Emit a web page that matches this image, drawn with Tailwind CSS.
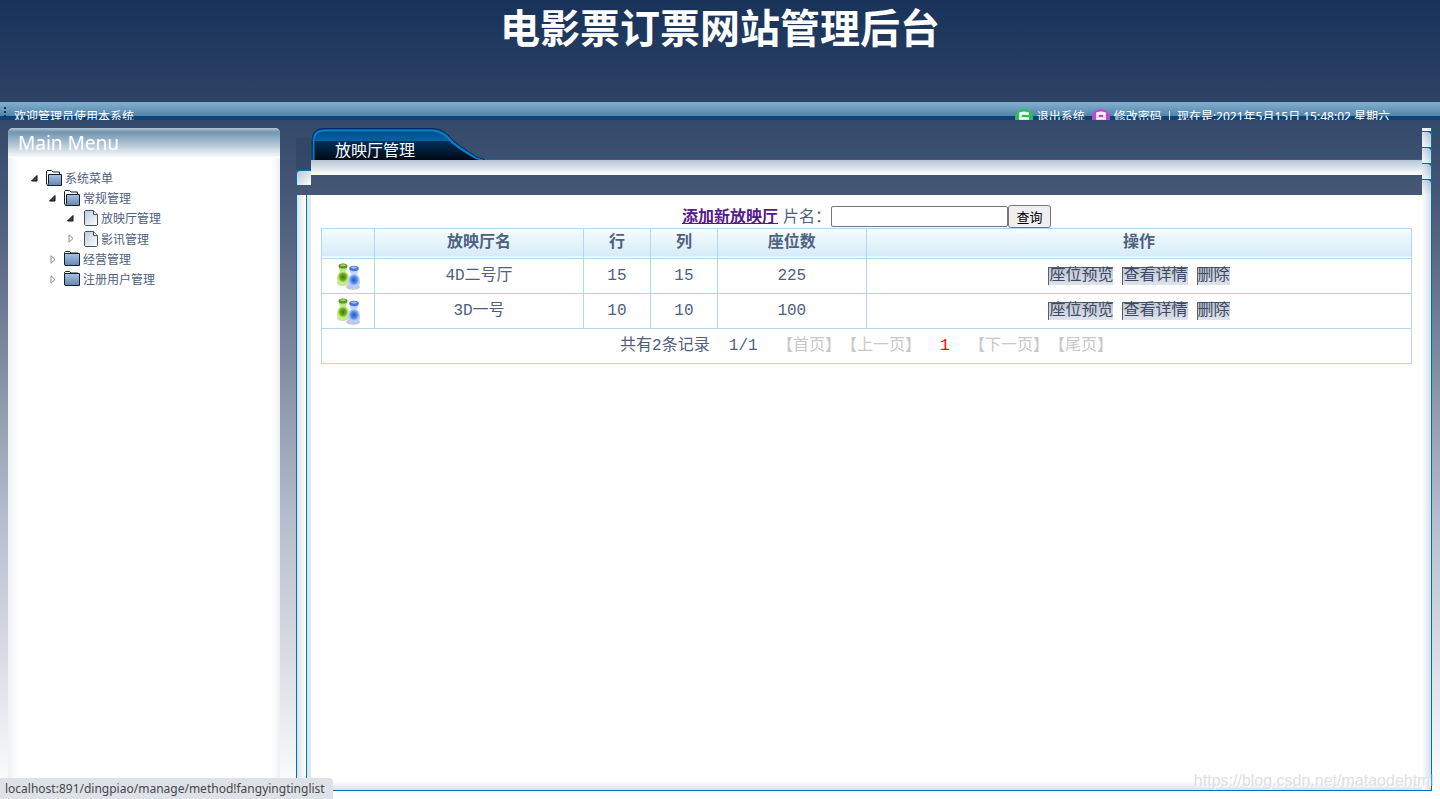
<!DOCTYPE html>
<html lang="zh-CN">
<head>
<meta charset="utf-8">
<title>电影票订票网站管理后台</title>
<script src="https://cdn.jsdelivr.net/npm/@tailwindcss/browser@4"></script>
</head>
<body class="relative flex h-screen flex-col overflow-hidden font-['Liberation_Sans','Noto_Sans_CJK_SC',sans-serif] text-[#4f6180]">
<svg class="absolute h-0 w-0" aria-hidden="true">
  <defs>
    <linearGradient id="gFolder" x1="0" y1="0" x2="0" y2="1"><stop offset="0" stop-color="#a9c2e0"/><stop offset="1" stop-color="#6486b0"/></linearGradient>
    <linearGradient id="gPage" x1="0" y1="0" x2="1" y2="1"><stop offset="0" stop-color="#b9cbdb"/><stop offset="1" stop-color="#ffffff"/></linearGradient>
    <linearGradient id="gTabTop" x1="0" y1="0" x2="0" y2="1"><stop offset="0" stop-color="#004a86"/><stop offset=".4" stop-color="#0562a6"/></linearGradient>
    <linearGradient id="gTabBottom" x1="0" y1="0" x2="0" y2="1"><stop offset="0" stop-color="#00305a"/><stop offset="1" stop-color="#000a14"/></linearGradient>
    <radialGradient id="gGreen" cx=".5" cy=".5" r=".5"><stop offset="0" stop-color="#3f7d06"/><stop offset=".6" stop-color="#6dab22"/><stop offset="1" stop-color="#c3f07a"/></radialGradient>
    <radialGradient id="gBlue" cx=".5" cy=".5" r=".5"><stop offset="0" stop-color="#2457b4"/><stop offset=".6" stop-color="#5b8ce8"/><stop offset="1" stop-color="#b5cfff"/></radialGradient>
    <symbol id="folderOpen" viewBox="0 0 16 16">
      <path d="M.5 14.5V1.500L1.500.5H5.500L7 2H13.500V4" fill="#fff" stroke="#14202e"/>
      <path d="M2.500 4.500H15.500V15.500H1.500L2.500 13Z" fill="url(#gFolder)" stroke="#14202e"/>
    </symbol>
    <symbol id="folder" viewBox="0 0 16 16">
      <path d="M.5 2.500V1.500L1.500.5H5.500L7 2H14" fill="#fff" stroke="#14202e"/>
      <path d="M.5 2.500H15.500V14.500H1L.5 13Z" fill="url(#gFolder)" stroke="#14202e"/>
    </symbol>
    <symbol id="page" viewBox="0 0 14 16">
      <path d="M1.500.5H9.500L13.500 4.500V14.500L12.500 15.500H1.500L.5 14.500V1.500Z" fill="url(#gPage)" stroke="#424d5c"/>
      <path d="M9.500.5V4.500H13.500" fill="#fff" stroke="#424d5c"/>
    </symbol>
    <symbol id="opened" viewBox="0 0 7 7"><path d="M6 .5V6H.5Z" fill="#444" stroke="#111"/></symbol>
    <symbol id="closed" viewBox="0 0 7 9"><path d="M2 .8V8.200L6 4.500Z" fill="#fff" stroke="#8b8b8b"/></symbol>
    <symbol id="users" viewBox="0 0 25 27">
      <ellipse cx="17" cy="24" rx="7" ry="2.800" fill="#c4c8cc"/>
      <ellipse cx="7" cy="20" rx="6" ry="3" fill="#cfd4c6"/>
      <ellipse cx="7" cy="5" rx="4" ry="4.500" fill="#bdea80"/>
      <ellipse cx="7" cy="3" rx="4.500" ry="2.600" fill="#5c9420"/>
      <ellipse cx="7" cy="2.200" rx="2.800" ry="1" fill="#a8d070"/>
      <path d="M7 8c4 0 6 3.500 5.800 7.500S11 22 7 22 1 19.500 1.100 15.500 3 8 7 8Z" fill="#c2f07c"/>
      <ellipse cx="7" cy="14" rx="5.200" ry="5.600" fill="url(#gGreen)"/>
      <ellipse cx="18" cy="8" rx="4" ry="4" fill="#c3d6ff"/>
      <ellipse cx="18" cy="5.500" rx="4.800" ry="2.800" fill="#4a78d4"/>
      <ellipse cx="18" cy="4.600" rx="3" ry="1.100" fill="#9dbdf8"/>
      <path d="M18 11c4 0 6 3.500 6 7.500S22 25 18 25 12 22.500 12 18.500 14 11 18 11Z" fill="#b5ceff"/>
      <ellipse cx="18" cy="17" rx="5.300" ry="5.800" fill="url(#gBlue)"/>
    </symbol>
  </defs>
</svg>

<header class="h-[102px] shrink-0 bg-linear-to-b from-[#18325a] to-[#2d4365] pt-[2px]">
  <h1 class="text-center font-['Noto_Sans_CJK_SC',sans-serif] text-[40px] leading-[48px] font-bold text-white">电影票订票网站管理后台</h1>
</header>

<div class="flex h-[18px] shrink-0 justify-between overflow-hidden bg-[linear-gradient(to_bottom,#82b0d0_0,#5384a8_14px,#0d4478_14px,#0d4478_18px)] pt-[5px] pr-[50px] pl-1 font-['Noto_Sans','Noto_Sans_CJK_SC',sans-serif] text-xs leading-5 text-white">
  <div class="flex gap-2"><span class="h-5 w-[2px] bg-[repeating-linear-gradient(to_bottom,#17345c_0,#17345c_2px,transparent_2px,transparent_4px)]"></span><span>欢迎管理员使用本系统</span></div>
  <div class="flex gap-1">
    <svg class="mt-px h-[18px] w-[18px]" viewBox="0 0 18 18"><circle cx="9" cy="10" r="9" fill="#27c254"/><path d="M4 6Q9 0 14 6" fill="#7be79a"/><path d="M5.500 9V5.500H12.500V7M4 10.500H14" fill="none" stroke="#fff" stroke-width="2.500"/></svg>
    <a href="#" class="mr-[3px]">退出系统</a>
    <svg class="mt-px h-[18px] w-[18px]" viewBox="0 0 18 18"><circle cx="9" cy="10" r="9" fill="#c843cb"/><path d="M4 6Q9 0 14 6" fill="#eaa0ec"/><path d="M5.500 9V5.500H12.500V9M4 10.500H14" fill="none" stroke="#fff" stroke-width="2.500"/></svg>
    <a href="#">修改密码</a>
    <span class="mx-[3px] mt-1 h-[14px] w-px bg-white/80"></span>
    <span>现在是:2021年5月15日 15:48:02 星期六</span>
  </div>
</div>

<div class="flex min-h-0 flex-1 gap-4 bg-[linear-gradient(to_bottom,#34486b_0,#455876_11%,#6b7990_27%,#8f9aad_42%,#b5bccb_58%,#dfe1e8_82%,#ffffff_100%)] px-2 pt-2">
  <nav class="w-[272px] shrink-0 overflow-hidden rounded-t-[5px] bg-white bg-linear-to-r from-[#eff2f5] via-white via-[4%] to-white shadow-[inset_-8px_0_8px_-6px_#e4e9ee]">
    <h2 class="h-[30px] bg-[linear-gradient(to_bottom,#b4c7d6_0,#7194b0_4px,#a4bbcd_14px,#ffffff_30px)] pl-[10px] font-['Noto_Sans',sans-serif] text-[19px] leading-[30px] text-white">Main Menu</h2>
    <ul class="pt-[10px] pl-[23px] text-xs leading-[20px] font-['Noto_Sans_CJK_SC',sans-serif]">
      <li>
        <a href="#" class="flex h-5 items-center"><svg class="mr-2 h-[7px] w-[7px]"><use href="#opened"/></svg><svg class="mr-[3px] h-4 w-4"><use href="#folderOpen"/></svg>系统菜单</a>
        <ul class="pl-[18px]">
          <li>
            <a href="#" class="flex h-5 items-center"><svg class="mr-2 h-[7px] w-[7px]"><use href="#opened"/></svg><svg class="mr-[3px] h-4 w-4"><use href="#folderOpen"/></svg>常规管理</a>
            <ul class="pl-[18px]">
              <li><a href="#" class="flex h-5 items-center"><svg class="mr-[10px] h-[7px] w-[7px]"><use href="#opened"/></svg><svg class="mr-[3px] h-4 w-[14px]"><use href="#page"/></svg>放映厅管理</a></li>
              <li><a href="#" class="flex h-[21px] items-center"><svg class="mr-[10px] h-[9px] w-[7px]"><use href="#closed"/></svg><svg class="mr-[3px] h-4 w-[14px]"><use href="#page"/></svg>影讯管理</a></li>
            </ul>
          </li>
          <li><a href="#" class="flex h-5 items-center"><svg class="mr-2 h-[9px] w-[7px]"><use href="#closed"/></svg><svg class="mr-[3px] h-4 w-4"><use href="#folder"/></svg>经营管理</a></li>
          <li><a href="#" class="flex h-5 items-center"><svg class="mr-2 h-[9px] w-[7px]"><use href="#closed"/></svg><svg class="mr-[3px] h-4 w-4"><use href="#folder"/></svg>注册用户管理</a></li>
        </ul>
      </li>
    </ul>
  </nav>

  <div class="mb-2 flex min-w-0 flex-1">
    <div class="flex w-[15px] shrink-0 flex-col">
      <div class="mt-[10px] h-8 bg-[#2f4261]/60"></div>
      <div class="h-[15px] rounded-tl-[4px] border-t border-l border-[#0072b5] bg-linear-to-br from-[#b5c8d6] to-white"></div>
      <div class="mt-[10px] flex flex-1 border-l border-[#0072b5]">
        <div class="w-[9px] bg-linear-to-r from-[#d9e4eb] to-white"></div>
        <div class="flex-1 border-l border-[#0072b5] bg-[#e1e9ef]"></div>
      </div>
    </div>
    <main class="flex min-w-0 flex-1 flex-col">
      <div class="grid h-8 grid-rows-[31px] border-b border-[#0b6cae]">
        <svg class="col-start-1 row-start-1 h-8 w-[174px]" viewBox="0 0 174 32">
          <path d="M1 32V12Q2 1 13 1H122Q132 2 139 10T166 29L174 32Z" fill="url(#gTabTop)"/>
          <path d="M1 32V13H142Q154 26 174 32Z" fill="url(#gTabBottom)"/>
          <path d="M2.500 32V12Q3.500 2.500 13 2.500H121Q131 3 138 11T165 30L172 32" fill="none" stroke="#0a7fc0" stroke-width="2"/>
          <path d="M1 32V12Q2 .5 13 .5H122Q132 1 139 9T166 29L174 31.500" fill="none" stroke="#00296b"/>
        </svg>
        <h2 class="col-start-1 row-start-1 self-end pl-6 font-['Noto_Sans_CJK_SC',sans-serif] text-base leading-[20px] text-white">放映厅管理</h2>
      </div>
      <div class="h-[15px] bg-linear-to-b from-[#b3c4d3] to-white"></div>
      <div class="mt-5 flex-1 border-b border-[#0072b5] bg-[linear-gradient(to_top,#d9e4eb_0,#ffffff_9px)] px-[10px] pt-[10px]">
        <form class="flex h-[23px] items-center justify-center leading-[20px]">
          <a href="#" class="mr-[5px] pb-[3px] font-['Noto_Sans_CJK_SC',sans-serif] font-bold text-[#551a8b] underline">添加新放映厅</a>
          <label for="q" class="pb-[3px] font-['Noto_Sans_CJK_TC',sans-serif]">片名：</label>
          <input id="q" type="text" class="h-[21px] w-[177px] rounded-[2px] border border-[#767676] bg-white px-1 text-[13px] text-black">
          <button type="button" class="h-[23px] w-[43px] rounded-[3px] border border-[#767676] bg-[#efefef] font-['Noto_Sans_CJK_SC',sans-serif] text-[13px] leading-[20px] text-black">查询</button>
        </form>
        <table class="w-full table-fixed border-collapse text-center font-['Liberation_Mono','Noto_Sans_CJK_SC',monospace] text-base leading-[24px] [&_td]:border [&_td]:border-[#b5d6ec] [&_th]:border [&_th]:border-[#b5d6ec]">
          <colgroup><col class="w-[4.9%]"><col class="w-[19.1%]"><col class="w-[6.2%]"><col class="w-[6.1%]"><col class="w-[13.7%]"><col></colgroup>
          <thead>
            <tr class="h-[30px] bg-[linear-gradient(to_bottom,#ffffff_0,#eff9fd_5px,#d6ecf7_27px,#ffffff_28px)] font-['Noto_Sans_CJK_SC',sans-serif] leading-[20px] [&>th]:pb-2"><th></th><th>放映厅名</th><th>行</th><th>列</th><th>座位数</th><th>操作</th></tr>
          </thead>
          <tbody>
            <tr class="h-[35px]">
              <td><svg class="mx-auto h-[27px] w-[25px]"><use href="#users"/></svg></td><td>4D二号厅</td><td>15</td><td>15</td><td>225</td>
              <td><div class="flex justify-center gap-[9px] text-[#3b4a68] [&>a]:h-[18px] [&>a]:border-t [&>a]:border-l [&>a]:border-[#555f6e] [&>a]:bg-linear-to-b [&>a]:from-[#c2c7d0] [&>a]:to-[#e0e3ec] [&>a]:leading-[17px]"><a href="#">座位预览</a><a href="#">查看详情</a><a href="#">删除</a></div></td>
            </tr>
            <tr class="h-[35px]">
              <td><svg class="mx-auto h-[27px] w-[25px]"><use href="#users"/></svg></td><td>3D一号</td><td>10</td><td>10</td><td>100</td>
              <td><div class="flex justify-center gap-[9px] text-[#3b4a68] [&>a]:h-[18px] [&>a]:border-t [&>a]:border-l [&>a]:border-[#555f6e] [&>a]:bg-linear-to-b [&>a]:from-[#c2c7d0] [&>a]:to-[#e0e3ec] [&>a]:leading-[17px]"><a href="#">座位预览</a><a href="#">查看详情</a><a href="#">删除</a></div></td>
            </tr>
            <tr class="h-[35px]">
              <td colspan="6" class="whitespace-pre [text-spacing-trim:space-all]">共有2条记录  1/1  <span class="text-[#c8c8c8]">【首页】【上一页】</span>  <span class="text-[#ff0000]">1</span>  <span class="text-[#c8c8c8]">【下一页】【尾页】</span></td>
            </tr>
          </tbody>
        </table>
      </div>
    </main>
    <div class="flex w-[10px] shrink-0 flex-col border-r border-[#0f6ba8]">
      <div class="h-[3px] bg-[#f1f5f8]"></div>
      <div class="h-4 rounded-tr-[4px] border-t border-[#0f6ba8] bg-linear-to-bl from-[#a9bfd0] to-white"></div>
      <div class="h-4 rounded-tr-[4px] border-t border-[#0f6ba8] bg-linear-to-bl from-[#a9bfd0] to-white"></div>
      <div class="h-4 rounded-tr-[4px] border-t border-[#0f6ba8] bg-linear-to-bl from-[#a9bfd0] to-white"></div>
      <div class="h-4 rounded-tr-[4px] border-t border-[#0f6ba8] bg-linear-to-bl from-[#a9bfd0] to-white"></div>
      <div class="flex-1 border-b border-[#0072b5] bg-linear-to-r from-white to-[#d3e1ea]"></div>
    </div>
  </div>
</div>

<div class="absolute right-[6px] bottom-[8px] text-base leading-5 text-[#dcdfe3] [text-shadow:1px_1px_0_#fff]">https://blog.csdn.net/mataodehtml</div>
<div class="absolute bottom-0 left-0 h-[21px] rounded-tr-[4px] bg-[#dee1e6] pr-2 pl-[5px] font-['Noto_Sans',sans-serif] text-xs leading-[21px] text-[#44484d]">localhost:891/dingpiao/manage/method!fangyingtinglist</div>
</body>
</html>
